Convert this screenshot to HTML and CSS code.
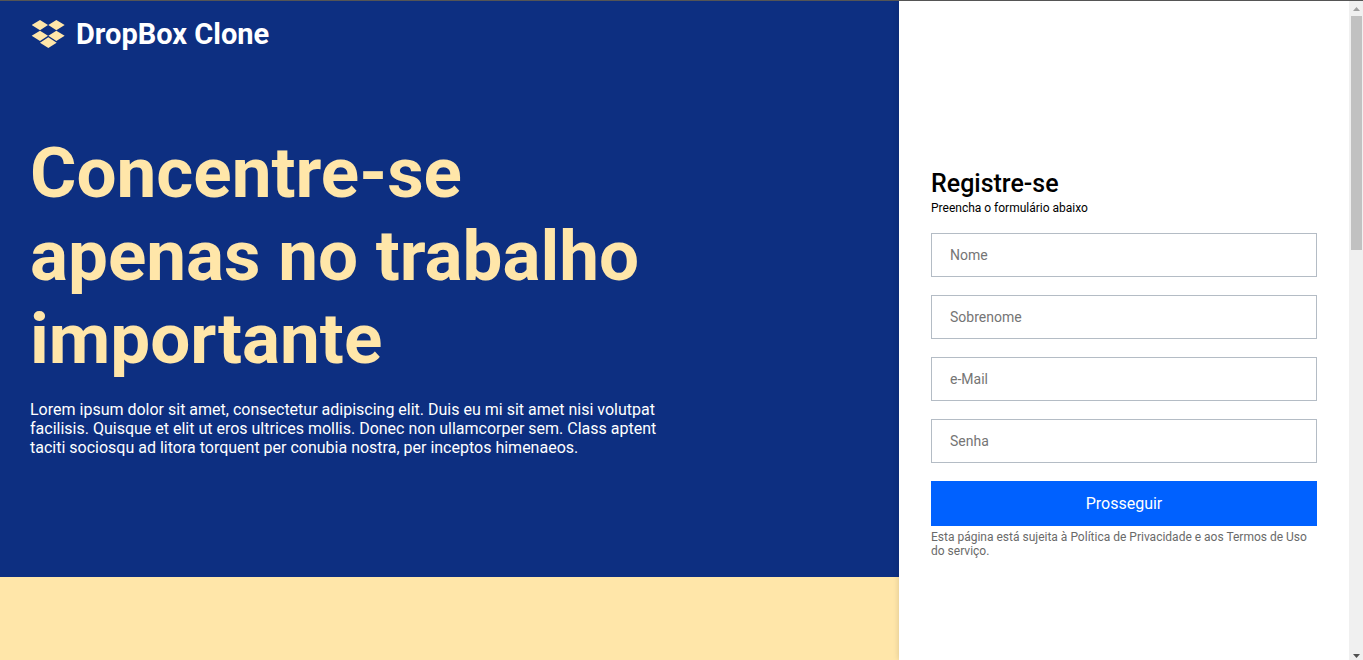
FILE: index.html
```html
<!DOCTYPE html>
<html lang="pt-BR">
<head>
<meta charset="utf-8">
<title>DropBox Clone</title>
<link rel="stylesheet" href="styles.css">
</head>
<body>
<div class="page">
  <main class="main">
    <section class="hero">
      <header class="brand">
        <svg class="brand-icon" viewBox="0 0 102 90" aria-hidden="true">
          <path d="M27 3 51 18 27 34 2 18zM76 3 101 18 76 34 52 18zM27 35 51 50 27 66 2 50zM76 35 101 50 76 66 52 50zM52 55 77 71 52 87 27 71z"/>
        </svg>
        <span class="brand-name">DropBox Clone</span>
      </header>
      <div class="intro">
        <h1 class="title">Concentre-se apenas no trabalho importante</h1>
        <p class="lead">Lorem ipsum dolor sit amet, consectetur adipiscing elit. Duis eu mi sit amet nisi volutpat facilisis. Quisque et elit ut eros ultrices mollis. Donec non ullamcorper sem. Class aptent taciti sociosqu ad litora torquent per conubia nostra, per inceptos himenaeos.</p>
      </div>
    </section>
    <section class="next"></section>
  </main>
  <aside class="signup">
    <h2 class="signup-title">Registre-se</h2>
    <p class="signup-sub">Preencha o formulário abaixo</p>
    <form class="form">
      <input class="field" type="text" placeholder="Nome" aria-label="Nome">
      <input class="field" type="text" placeholder="Sobrenome" aria-label="Sobrenome">
      <input class="field" type="email" placeholder="e-Mail" aria-label="e-Mail">
      <input class="field" type="password" placeholder="Senha" aria-label="Senha">
      <button class="submit" type="button">Prosseguir</button>
    </form>
    <p class="terms">Esta página está sujeita à Política de Privacidade e aos Termos de Uso do serviço.</p>
  </aside>
  <div class="scrollbar" aria-hidden="true">
    <svg class="arrow arrow-up" viewBox="0 0 7 4"><path d="M0 4 3.5 0 7 4z"/></svg>
    <div class="track"><div class="thumb"></div></div>
    <svg class="arrow arrow-down" viewBox="0 0 7 4"><path d="M0 0 3.5 4 7 0z"/></svg>
  </div>
</div>
</body>
</html>
```
FILE: styles.css
```css
* { box-sizing: border-box; margin: 0; padding: 0; }

body {
  font-family: Roboto, "Liberation Sans", sans-serif;
  color: #000;
  background: #fff;
}

.page {
  display: grid;
  grid-template-columns: 1fr 450px 14px;
  height: 100vh;
  border-top: 1px solid #555;
  overflow: hidden;
}

.main { display: flex; flex-direction: column; }

.hero {
  padding: 16px 30px 120px;
  background: #0d2f81;
  color: #fff;
}

.brand { display: flex; align-items: center; gap: 11px; }
.brand-icon { width: 34px; height: 30px; margin-left: 1px; fill: #ffe6a9; }
.brand-name { font-size: 29px; font-weight: 700; line-height: 34px; }

.intro { max-width: 640px; margin-top: 80px; }

.title {
  color: #ffe6a9;
  font-size: 71px;
  font-weight: 700;
  line-height: 83px;
}

.lead { margin-top: 20px; font-size: 16px; line-height: 19px; }

.next { flex: 1; background: #ffe6a9; }

.signup {
  position: relative;
  padding: 168px 32px 0;
  background: #fff;
  box-shadow: 0 0 6px rgba(0, 0, 0, 0.15);
}

.signup-title { font-size: 25px; font-weight: 500; line-height: 30px; }
.signup-sub { margin-top: 2px; font-size: 12px; line-height: 14px; }

.form { display: grid; gap: 18px; margin-top: 18px; }

.field {
  width: 100%;
  height: 44px;
  padding: 0 18px;
  border: 1px solid #b4bcc5;
  background: #fff;
  font: 14px Roboto, "Liberation Sans", sans-serif;
}
.field::placeholder { color: #757575; }

.submit {
  height: 45px;
  border: 0;
  background: #0061ff;
  color: #fff;
  font: 16px Roboto, "Liberation Sans", sans-serif;
}

.terms { margin-top: 4px; color: #6a6a6a; font-size: 12px; line-height: 14px; }

.scrollbar {
  position: relative;
  display: flex;
  flex-direction: column;
  align-items: center;
  gap: 5px;
  padding: 6px 0 2px;
  background: #f0f0f0;
}
.arrow { width: 7px; height: 4px; flex: none; }
.arrow-up { fill: #a0a0a0; }
.arrow-down { fill: #505050; }
.track { flex: 1; width: 11px; }
.thumb { height: 37%; background: #c1c1c1; }
```
